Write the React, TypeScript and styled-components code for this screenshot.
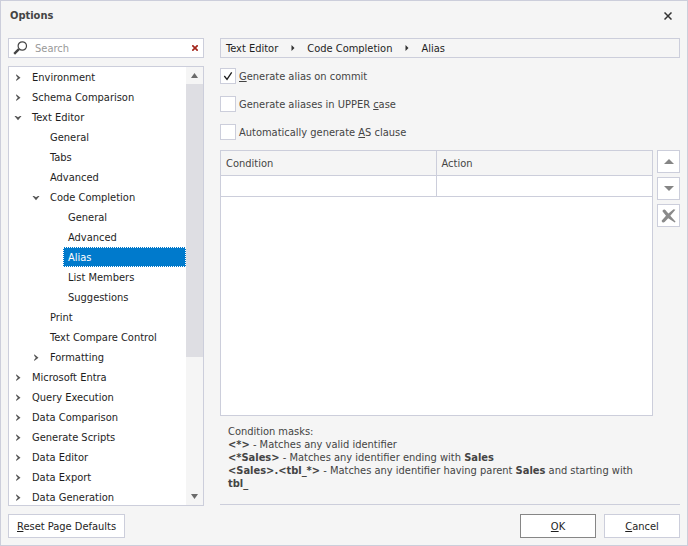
import React, { useState } from "react";
import styled, { createGlobalStyle, css } from "styled-components";

const line = "#cccedb";
const face = "#f5f5f5";
const ink = "#1e1e1e";
const softInk = "#444444";

const GlobalStyle = createGlobalStyle`
  *, *::before, *::after { box-sizing: border-box; }
  body { margin: 0; }
  body, button, input, table {
    font-family: "DejaVu Sans Condensed", "DejaVu Sans", sans-serif;
    font-stretch: condensed;
    font-size: 11px;
    line-height: 13px;
    color: ${ink};
  }
`;

const Dialog = styled.main`
  display: flex;
  flex-direction: column;
  height: 100vh;
  min-height: 400px;
  padding: 0 7px 7px;
  background: ${face};
  border: 1px solid ${line};
`;

const TitleBar = styled.header`
  display: flex;
  align-items: center;
  justify-content: space-between;
  height: 37px;
  flex: none;
  padding: 0 6px 8px 2px;
`;

const Title = styled.h1`
  margin: 0;
  font-size: 11px;
  font-weight: bold;
  color: ${softInk};
`;

const PlainButton = styled.button`
  display: grid;
  place-items: center;
  flex: none;
  width: 12px;
  height: 12px;
  padding: 0;
  border: 0;
  background: transparent;
`;

const Body = styled.div`
  flex: 1;
  min-height: 0;
  display: grid;
  grid-template-columns: 196px minmax(0, 1fr);
  grid-template-rows: minmax(0, 1fr);
  gap: 16px;
`;

const Sidebar = styled.nav`
  display: flex;
  flex-direction: column;
  gap: 8px;
  min-height: 0;
`;

const SearchBox = styled.div`
  display: flex;
  align-items: center;
  flex: none;
  height: 20px;
  padding: 0 2px 0 4px;
  background: #fff;
  border: 1px solid ${line};
`;

const SearchInput = styled.input`
  flex: 1;
  min-width: 0;
  margin: 0 0 0 7px;
  padding: 0;
  border: 0;
  outline: 0;
  background: transparent;
  &::placeholder { color: #999; opacity: 1; }
`;

const TreePanel = styled.div`
  display: flex;
  flex: 1;
  min-height: 0;
  background: #fff;
  border: 1px solid ${line};
`;

const Tree = styled.ul`
  flex: 1;
  min-width: 0;
  margin: 0;
  padding: 0;
  overflow: hidden;
  list-style: none;
`;

const TreeRow = styled.li<{ $level: number }>`
  display: flex;
  height: 20px;
  padding-left: ${(p) => p.$level * 18}px;
`;

const Expander = styled.span`
  display: grid;
  place-items: center;
  flex: none;
  width: 18px;
  height: 20px;
`;

const TreeLabel = styled.a<{ $selected: boolean }>`
  flex: 1;
  padding: 3px 5px 4px;
  border: 1px solid transparent;
  border-width: 1px 1px 0 0;
  line-height: 13px;
  color: ${ink};
  text-decoration: none;
  white-space: nowrap;
  ${(p) =>
    p.$selected &&
    css`
      padding: 3px 4px;
      border: 1px dotted #fff;
      background: #007acc;
      color: #fff;
    `}
`;

const ScrollBar = styled.div`
  display: flex;
  flex-direction: column;
  flex: none;
  width: 17px;
  background: ${face};
`;

const ScrollArrow = styled.button`
  display: grid;
  place-items: center;
  flex: none;
  height: 17px;
  padding: 0;
  border: 0;
  background: ${face};
`;

const ScrollTrack = styled.div`
  flex: 1;
`;

const ScrollThumb = styled.div`
  height: 67.5%;
  background: #dedee3;
`;

const Page = styled.section`
  display: flex;
  flex-direction: column;
  min-height: 0;
  padding-bottom: 1px;
`;

const Breadcrumb = styled.div`
  display: flex;
  align-items: center;
  flex: none;
  height: 20px;
  padding: 0 5px;
  border: 1px solid ${line};
`;

const CrumbArrow = styled.svg`
  margin: 0 12px 0 13px;
`;

const Checks = styled.div`
  display: flex;
  flex-direction: column;
  align-items: flex-start;
  gap: 12px;
  padding: 10px 0;
`;

const CheckLabel = styled.label`
  display: flex;
  align-items: center;
  gap: 3px;
  height: 16px;
  color: ${softInk};
`;

const CheckBox = styled.span`
  display: grid;
  place-items: center;
  > * { grid-area: 1 / 1; }
  > svg { pointer-events: none; }
`;

const CheckInput = styled.input`
  appearance: none;
  width: 16px;
  height: 16px;
  margin: 0;
  background: #fff;
  border: 1px solid ${line};
`;

const Mnemonic = styled.span`
  text-decoration: underline;
  text-decoration-thickness: 1px;
  text-underline-offset: 1px;
  text-decoration-skip-ink: none;
`;

const GridArea = styled.div`
  display: flex;
  flex: 1;
  min-height: 0;
  gap: 4px;
`;

const GridFrame = styled.div`
  flex: 1;
  min-width: 0;
  background: #fff;
  border: 1px solid ${line};
`;

const RuleTable = styled.table`
  width: 100%;
  border-collapse: separate;
  border-spacing: 0;
  table-layout: fixed;
  color: ${softInk};
  th, td {
    padding: 0 5px;
    border-bottom: 1px solid ${line};
    text-align: left;
    font-weight: normal;
  }
  th { height: 25px; background: ${face}; }
  td { height: 21px; }
  th:first-child, td:first-child { border-right: 1px solid ${line}; }
`;

const SideButtons = styled.div`
  display: flex;
  flex-direction: column;
  gap: 4px;
`;

const IconButton = styled.button`
  display: grid;
  place-items: center;
  width: 23px;
  height: 23px;
  padding: 0;
  background: #fff;
  border: 1px solid ${line};
`;

const Masks = styled.div`
  padding: 9px 35px 14px 8px;
  color: ${softInk};
  border-bottom: 1px solid ${line};
  p { margin: 0; }
`;

const Footer = styled.footer`
  display: flex;
  flex: none;
  gap: 8px;
  padding-top: 8px;
`;

const Spacer = styled.span`
  flex: 1;
`;

const PushButton = styled.button<{ $default?: boolean }>`
  min-width: 76px;
  height: 24px;
  padding: 0 8px;
  background: #fff;
  border: 1px solid ${(p) => (p.$default ? "#868686" : line)};
`;

type Node = { label: string; level: number; open?: boolean };

const nodes: Node[] = [
  { label: "Environment", level: 0, open: false },
  { label: "Schema Comparison", level: 0, open: false },
  { label: "Text Editor", level: 0, open: true },
  { label: "General", level: 1 },
  { label: "Tabs", level: 1 },
  { label: "Advanced", level: 1 },
  { label: "Code Completion", level: 1, open: true },
  { label: "General", level: 2 },
  { label: "Advanced", level: 2 },
  { label: "Alias", level: 2 },
  { label: "List Members", level: 2 },
  { label: "Suggestions", level: 2 },
  { label: "Print", level: 1 },
  { label: "Text Compare Control", level: 1 },
  { label: "Formatting", level: 1, open: false },
  { label: "Microsoft Entra", level: 0, open: false },
  { label: "Query Execution", level: 0, open: false },
  { label: "Data Comparison", level: 0, open: false },
  { label: "Generate Scripts", level: 0, open: false },
  { label: "Data Editor", level: 0, open: false },
  { label: "Data Export", level: 0, open: false },
  { label: "Data Generation", level: 0, open: false },
];

const Chevron = ({ open }: { open: boolean }) =>
  open ? (
    <svg width="8" height="8" viewBox="0 0 8 8">
      <path d="M0.5 3H2L4 4.3L6 3H7.5L4 7.2Z" fill="#555" />
    </svg>
  ) : (
    <svg width="8" height="8" viewBox="0 0 8 8">
      <path d="M2.2 1.2V2.7L3.8 4.7L2.2 6.7V8L6.5 4.7Z" fill="#555" />
    </svg>
  );

const Triangle = ({ down, width = 7, color = "#6b6b6b" }: { down?: boolean; width?: number; color?: string }) => (
  <svg width={width} height="5" viewBox="0 0 10 5" preserveAspectRatio="none">
    <path d={down ? "M0 0H10L5 5Z" : "M0 5H10L5 0Z"} fill={color} />
  </svg>
);

const checkRows = [
  { before: "", mark: "G", after: "enerate alias on commit", on: true },
  { before: "Generate aliases in UPPER ", mark: "c", after: "ase", on: false },
  { before: "Automatically generate ", mark: "A", after: "S clause", on: false },
];

function CheckRow({ before, mark, after, on }: (typeof checkRows)[number]) {
  const [checked, setChecked] = useState(on);
  return (
    <CheckLabel>
      <CheckBox>
        <CheckInput type="checkbox" checked={checked} onChange={(e) => setChecked(e.target.checked)} />
        {checked && (
          <svg width="10" height="10" viewBox="0 0 10 10" fill="none" stroke={ink} strokeWidth="1.3">
            <path d="M1.3 5L4 8.3L8.7 1.3" />
          </svg>
        )}
      </CheckBox>
      <span>
        {before}
        <Mnemonic>{mark}</Mnemonic>
        {after}
      </span>
    </CheckLabel>
  );
}

export default function App() {
  const [selected, setSelected] = useState(9);
  const [query, setQuery] = useState("");
  return (
    <>
      <GlobalStyle />
      <Dialog>
        <TitleBar>
          <Title>Options</Title>
          <PlainButton aria-label="Close">
            <svg width="8" height="8" viewBox="0 0 8 8" stroke="#333" strokeWidth="1.5">
              <path d="M0.5 0.5L7.5 7.5M7.5 0.5L0.5 7.5" />
            </svg>
          </PlainButton>
        </TitleBar>
        <Body>
          <Sidebar aria-label="Option pages">
            <SearchBox>
              <svg width="15" height="14" viewBox="0 0 15 14" fill="none" stroke="#444">
                <circle cx="9.3" cy="5" r="4.2" strokeWidth="1.2" />
                <path d="M5.9 8.2L1.2 12.8" strokeWidth="2.4" />
              </svg>
              <SearchInput
                aria-label="Search"
                placeholder="Search"
                value={query}
                onChange={(e) => setQuery(e.target.value)}
              />
              <PlainButton aria-label="Clear search" onClick={() => setQuery("")}>
                <svg width="6" height="6" viewBox="0 0 6 6" stroke="#a3251b" strokeWidth="1.7">
                  <path d="M0.3 0.3L5.7 5.7M5.7 0.3L0.3 5.7" />
                </svg>
              </PlainButton>
            </SearchBox>
            <TreePanel>
              <Tree>
                {nodes.map((n, i) => (
                  <TreeRow key={i} $level={n.level}>
                    <Expander>{n.open !== undefined && <Chevron open={n.open} />}</Expander>
                    <TreeLabel
                      href="#"
                      $selected={i === selected}
                      onClick={(e) => {
                        e.preventDefault();
                        setSelected(i);
                      }}
                    >
                      {n.label}
                    </TreeLabel>
                  </TreeRow>
                ))}
              </Tree>
              <ScrollBar>
                <ScrollArrow aria-label="Scroll up">
                  <Triangle />
                </ScrollArrow>
                <ScrollTrack>
                  <ScrollThumb />
                </ScrollTrack>
                <ScrollArrow aria-label="Scroll down">
                  <Triangle down />
                </ScrollArrow>
              </ScrollBar>
            </TreePanel>
          </Sidebar>
          <Page>
            <Breadcrumb>
              {["Text Editor", "Code Completion", "Alias"].map((c, i) => (
                <React.Fragment key={c}>
                  {i > 0 && (
                    <CrumbArrow width="4" height="6" viewBox="0 0 4 6">
                      <path d="M0.5 0L3.5 3L0.5 6Z" fill="#333" />
                    </CrumbArrow>
                  )}
                  <span>{c}</span>
                </React.Fragment>
              ))}
            </Breadcrumb>
            <Checks>
              {checkRows.map((c) => (
                <CheckRow key={c.after} {...c} />
              ))}
            </Checks>
            <GridArea>
              <GridFrame>
                <RuleTable>
                  <thead>
                    <tr>
                      <th scope="col">Condition</th>
                      <th scope="col">Action</th>
                    </tr>
                  </thead>
                  <tbody>
                    <tr>
                      <td />
                      <td />
                    </tr>
                  </tbody>
                </RuleTable>
              </GridFrame>
              <SideButtons>
                <IconButton aria-label="Move up">
                  <Triangle width={10} color="#858585" />
                </IconButton>
                <IconButton aria-label="Move down">
                  <Triangle down width={10} color="#858585" />
                </IconButton>
                <IconButton aria-label="Delete">
                  <svg width="15" height="14" viewBox="0 0 15 14" fill="#8a8a8a">
                    <path d="M1.8 1.2C2.8 0 4.2 0.4 5.2 2L7.4 4.6L12.6 0.2L14.4 0.8L9.3 6.8L14.6 12.8L13.8 13.6L7.2 9.2L3.6 13C2.4 14.2 0.2 13 0.8 11.4L5 6.8L2 3C1.4 2.4 1.4 1.8 1.8 1.2Z" />
                  </svg>
                </IconButton>
              </SideButtons>
            </GridArea>
            <Masks>
              <p>Condition masks:</p>
              <p><b>&lt;*&gt;</b> - Matches any valid identifier</p>
              <p><b>&lt;*Sales&gt;</b> - Matches any identifier ending with <b>Sales</b></p>
              <p>
                <b>&lt;Sales&gt;.&lt;tbl_*&gt;</b> - Matches any identifier having parent <b>Sales</b> and starting with{" "}
                <b>tbl_</b>
              </p>
            </Masks>
          </Page>
        </Body>
        <Footer>
          <PushButton><Mnemonic>R</Mnemonic>eset Page Defaults</PushButton>
          <Spacer />
          <PushButton $default><Mnemonic>O</Mnemonic>K</PushButton>
          <PushButton><Mnemonic>C</Mnemonic>ancel</PushButton>
        </Footer>
      </Dialog>
    </>
  );
}
